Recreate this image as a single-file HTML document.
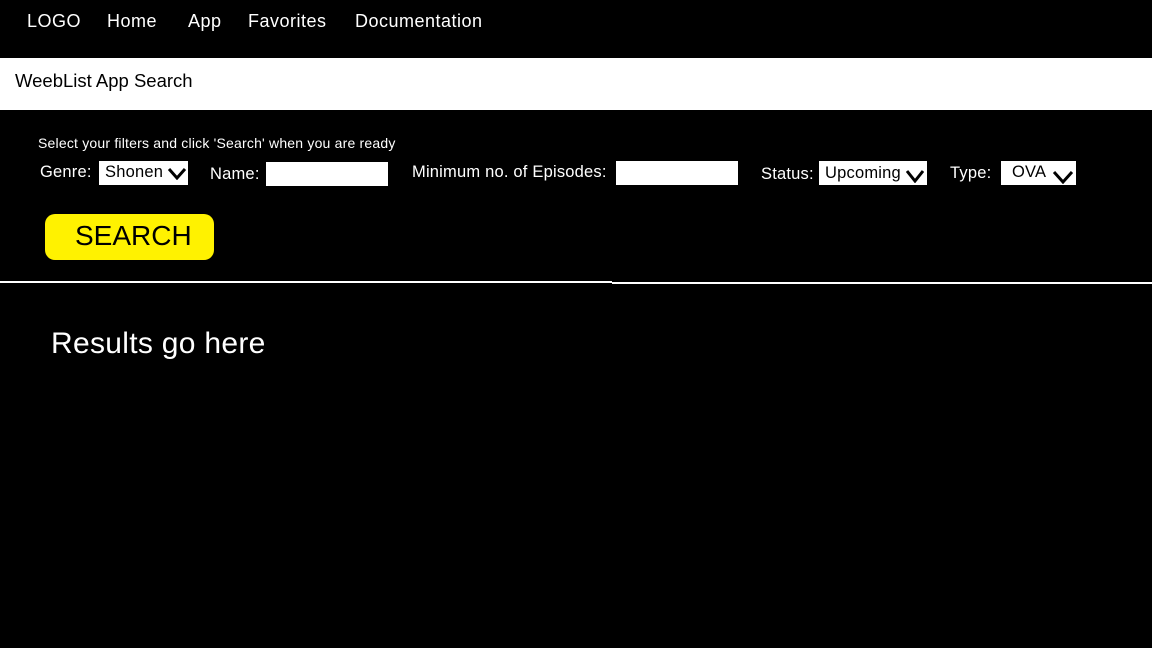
<!DOCTYPE html>
<html><head><meta charset="utf-8"><style>
body{margin:0;width:1152px;height:648px;background:#000;position:relative;overflow:hidden;font-family:"Liberation Sans",sans-serif;color:#fff}
.a{position:absolute;white-space:nowrap}
.nav{top:11px;font-size:18px;letter-spacing:0.5px}
.box{position:absolute;background:#fff;color:#000}
.chev{position:absolute}
.l{font-size:16.5px;letter-spacing:0.2px}
</style></head><body>
<div class="a nav" style="left:27px">LOGO</div>
<div class="a nav" style="left:107px">Home</div>
<div class="a nav" style="left:188px">App</div>
<div class="a nav" style="left:248px">Favorites</div>
<div class="a nav" style="left:355px">Documentation</div>
<div style="position:absolute;left:0;top:58px;width:1152px;height:52px;background:#fff"></div>
<div class="a" style="left:15px;top:70px;font-size:18.5px;color:#000">WeebList App Search</div>
<div class="a" style="left:38px;top:135px;font-size:14px;letter-spacing:0.2px">Select your filters and click 'Search' when you are ready</div>

<div class="a l" style="left:40px;top:163px">Genre:</div>
<div class="box" style="left:99px;top:161px;width:89px;height:24px"><span class="a l" style="left:6px;top:2px">Shonen</span>
<svg class="chev" style="left:69px;top:6px" width="18" height="13"><path d="M1 2 L9 11 L17 2" stroke="#000" stroke-width="3" fill="none"/></svg></div>

<div class="a l" style="left:210px;top:165px">Name:</div>
<div class="box" style="left:266px;top:162px;width:122px;height:24px"></div>

<div class="a l" style="left:412px;top:163px">Minimum no. of Episodes:</div>
<div class="box" style="left:616px;top:161px;width:122px;height:24px"></div>

<div class="a l" style="left:761px;top:165px">Status:</div>
<div class="box" style="left:819px;top:161px;width:108px;height:24px"><span class="a l" style="left:6px;top:3px">Upcoming</span>
<svg class="chev" style="left:87px;top:8px" width="18" height="14"><path d="M1 2 L9 12 L17 2" stroke="#000" stroke-width="3" fill="none"/></svg></div>

<div class="a l" style="left:950px;top:164px">Type:</div>
<div class="box" style="left:1001px;top:161px;width:75px;height:24px"><span class="a l" style="left:11px;top:2px">OVA</span>
<svg class="chev" style="left:52px;top:9px" width="20" height="14"><path d="M1 2 L10 12 L19 2" stroke="#000" stroke-width="3" fill="none"/></svg></div>

<div style="position:absolute;left:45px;top:214px;width:169px;height:46px;background:#fff200;border-radius:10px"></div>
<div class="a" style="left:75px;top:220px;font-size:28px;color:#000">SEARCH</div>

<div style="position:absolute;left:0;top:281px;width:612px;height:2px;background:#fff"></div>
<div style="position:absolute;left:612px;top:282px;width:540px;height:2px;background:#fff"></div>

<div class="a" style="left:51px;top:327px;font-size:30px;letter-spacing:0.3px">Results go here</div>
</body></html>
